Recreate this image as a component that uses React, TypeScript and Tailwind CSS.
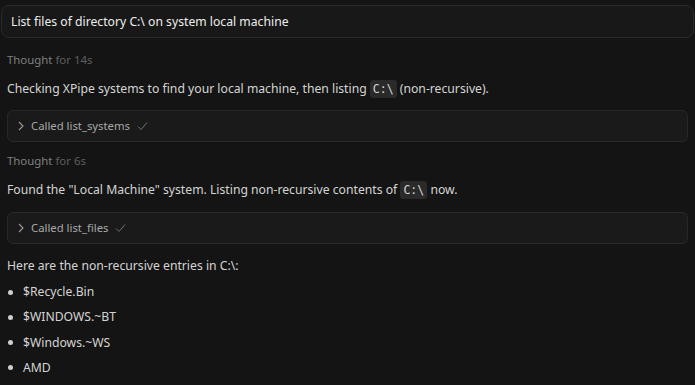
import React from 'react';

const ToolCall = ({ name }: { name: string }) => (
    <div className="mx-[7px] h-[32px] rounded-md border border-[#282828] bg-[#1a1a1a] flex items-center pl-[8px] gap-[5px] text-[11.3px] text-[#a8a8a8]">
        <svg width="10" height="10" viewBox="0 0 10 10" fill="none" stroke="#9a9a9a" strokeWidth="1.1">
            <path d="M3 1 L7 5 L3 9" />
        </svg>
        <span className="mr-[2px]">Called {name}</span>
        <svg width="11" height="10" viewBox="0 0 11 10" fill="none" stroke="#707070" strokeWidth="1">
            <path d="M1 5.5 L4 8.5 L10 1.5" />
        </svg>
    </div>
);

const Thought = ({ secs }: { secs: string }) => (
    <div className="px-[7px] leading-[20px] text-[11.4px] text-[#808080]">
        Thought <span className="text-[#5e5e5e]">for {secs}</span>
    </div>
);

const Code = ({ children }: { children: React.ReactNode }) => (
    <code className="px-[3px] py-[2px] rounded-[3px] bg-[#2a2a2a] text-[#d8d8d8] text-[11.5px] font-['DejaVu_Sans_Mono',monospace]">
        {children}
    </code>
);

export default function App() {
    const entries = ['$Recycle.Bin', '$WINDOWS.~BT', '$Windows.~WS', 'AMD'];

    return (
        <div className="w-[695px] h-[385px] overflow-hidden bg-[#141414] text-[12.2px] leading-[20px] text-[#d4d4d4] font-['Noto_Sans',sans-serif] pt-[5px]">
            <div className="mx-[1px] h-[33px] rounded-lg border border-[#2a2a2a] bg-[#181818] flex items-center px-[9px] text-[#ededed]">
                List files of directory C:\ on system local machine
            </div>

            <div className="mt-[12px]"><Thought secs="14s" /></div>
            <p className="px-[7px] mt-[9px]">
                Checking XPipe systems to find your local machine, then listing <Code>C:\</Code> (non-recursive).
            </p>
            <div className="mt-[11px]"><ToolCall name="list_systems" /></div>

            <div className="mt-[9px]"><Thought secs="6s" /></div>
            <p className="px-[7px] mt-[9px]">
                Found the "Local Machine" system. Listing non-recursive contents of <Code>C:\</Code> now.
            </p>
            <div className="mt-[12px]"><ToolCall name="list_files" /></div>

            <p className="px-[7px] mt-[12px]">Here are the non-recursive entries in C:\:</p>
            <ul className="mt-[6px] flex flex-col gap-[5.3px]">
                {entries.map((e) => (
                    <li key={e} className="flex items-center pl-[8px]">
                        <span className="w-[5px] h-[5px] rounded-full bg-[#cfcfcf] mr-[10px]" />
                        {e}
                    </li>
                ))}
            </ul>
        </div>
    );
}
